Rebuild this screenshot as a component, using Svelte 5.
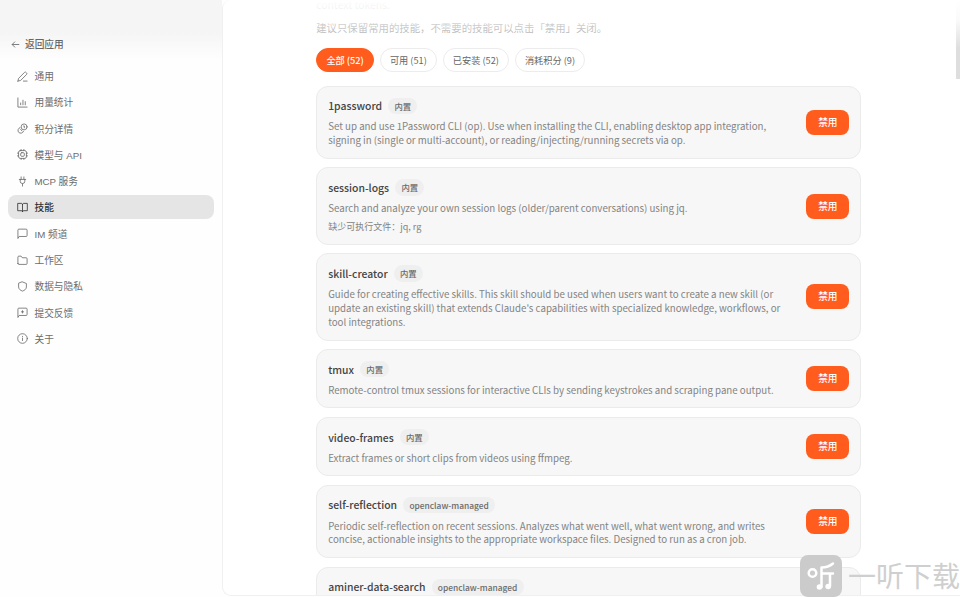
<script lang="ts">
  type Skill = {
    name: string;
    tag: string;
    desc: string;
    missing?: string;
  };

  const navItems = [
    { id: 'general', label: '通用' },
    { id: 'usage', label: '用量统计' },
    { id: 'credits', label: '积分详情' },
    { id: 'models', label: '模型与 API' },
    { id: 'mcp', label: 'MCP 服务' },
    { id: 'skills', label: '技能' },
    { id: 'im', label: 'IM 频道' },
    { id: 'workspace', label: '工作区' },
    { id: 'privacy', label: '数据与隐私' },
    { id: 'feedback', label: '提交反馈' },
    { id: 'about', label: '关于' }
  ];

  const filters = [
    { id: 'all', label: '全部', count: 52 },
    { id: 'available', label: '可用', count: 51 },
    { id: 'installed', label: '已安装', count: 52 },
    { id: 'paid', label: '消耗积分', count: 9 }
  ];

  const skills: Skill[] = [
    {
      name: '1password',
      tag: '内置',
      desc: 'Set up and use 1Password CLI (op). Use when installing the CLI, enabling desktop app integration, signing in (single or multi-account), or reading/injecting/running secrets via op.'
    },
    {
      name: 'session-logs',
      tag: '内置',
      desc: 'Search and analyze your own session logs (older/parent conversations) using jq.',
      missing: 'jq, rg'
    },
    {
      name: 'skill-creator',
      tag: '内置',
      desc: "Guide for creating effective skills. This skill should be used when users want to create a new skill (or update an existing skill) that extends Claude's capabilities with specialized knowledge, workflows, or tool integrations."
    },
    {
      name: 'tmux',
      tag: '内置',
      desc: 'Remote-control tmux sessions for interactive CLIs by sending keystrokes and scraping pane output.'
    },
    {
      name: 'video-frames',
      tag: '内置',
      desc: 'Extract frames or short clips from videos using ffmpeg.'
    },
    {
      name: 'self-reflection',
      tag: 'openclaw-managed',
      desc: 'Periodic self-reflection on recent sessions. Analyzes what went well, what went wrong, and writes concise, actionable insights to the appropriate workspace files. Designed to run as a cron job.'
    },
    {
      name: 'aminer-data-search',
      tag: 'openclaw-managed',
      desc: ''
    }
  ];

  let activeNav = $state('skills');
  let activeFilter = $state('all');
</script>

<div class="app">
  <aside class="sidebar">
    <button class="back" type="button">
      <svg viewBox="0 0 24 24"><path d="M21 12H4M10 5l-7 7 7 7" /></svg>
      <span>返回应用</span>
    </button>

    <nav>
      {#each navItems as item (item.id)}
        <button
          class="nav-item"
          class:active={activeNav === item.id}
          type="button"
          onclick={() => (activeNav = item.id)}
        >
          <svg viewBox="0 0 24 24">
            {#if item.id === 'general'}
              <path d="M2 22l1.5-6L16.500 3a2.200 2.200 0 0 1 3.100 0l1.400 1.400a2.200 2.200 0 0 1 0 3.100L8 20.500 2 22zM14 22h8" />
            {:else if item.id === 'usage'}
              <path d="M2 2v20h20M8 17v-4M13 17V7M18 17v-7" />
            {:else if item.id === 'credits'}
              <circle cx="15.5" cy="8.5" r="6.5" />
              <path d="M6.5 10a6.300 6.300 0 1 0 7.800 8M14.500 6.500h1.500v4M8 14l2.500 3" />
            {:else if item.id === 'models'}
              <rect x="3.5" y="3.5" width="17" height="17" rx="3.5" />
              <rect x="8" y="8" width="8" height="8" rx="2.5" />
              <path d="M9 1v2.500M15 1v2.500M9 20.500V23M15 20.500V23M1 9h2.500M1 15h2.500M20.500 9H23M20.500 15H23" />
            {:else if item.id === 'mcp'}
              <path d="M9 7V2M15 7V2M5 7.500h14M7 7.500v4a5 5 0 0 0 10 0v-4M12 17v5" />
            {:else if item.id === 'skills'}
              <path d="M12 5.500V21M12 5.500C12 4 10.700 3 9 3H1.500v16H9c1.700 0 3 .5 3 2 0-1.500 1.300-2 3-2h7.500V3H15c-1.700 0-3 1-3 2.500z" />
            {:else if item.id === 'im'}
              <path d="M2 22V4.500a2 2 0 0 1 2-2h16a2 2 0 0 1 2 2v12a2 2 0 0 1-2 2H5.500z" />
            {:else if item.id === 'workspace'}
              <path d="M2 18.500v-14a2 2 0 0 1 2-2h5L11.500 6H20a2 2 0 0 1 2 2v10.500a2 2 0 0 1-2 2H4a2 2 0 0 1-2-2z" />
            {:else if item.id === 'privacy'}
              <path d="M12 2l8.500 3.500V13c0 4.500-4 7.500-8.500 9-4.500-1.500-8.500-4.500-8.500-9V5.500z" />
            {:else if item.id === 'feedback'}
              <path d="M2 22V4.500a2 2 0 0 1 2-2h16a2 2 0 0 1 2 2v12a2 2 0 0 1-2 2H5.500zM12 8v5M9.500 10.500h5" />
            {:else}
              <circle cx="12" cy="12" r="10.5" />
              <path d="M12 11v5.500M12 7.200v.6" />
            {/if}
          </svg>
          <span>{item.label}</span>
        </button>
      {/each}
    </nav>
  </aside>

  <main class="panel">
    <div class="content">
      <div class="intro">
        <p>context tokens.</p>
        <p>建议只保留常用的技能，不需要的技能可以点击「禁用」关闭。</p>
      </div>

      <div class="filters">
        {#each filters as filter (filter.id)}
          <button
            class="filter"
            class:active={activeFilter === filter.id}
            type="button"
            onclick={() => (activeFilter = filter.id)}
          >{filter.label} ({filter.count})</button>
        {/each}
      </div>

      <div class="skills">
        {#each skills as skill (skill.name)}
          <article class="card">
            <div class="info">
              <div class="title">
                <h3>{skill.name}</h3>
                <span class="tag">{skill.tag}</span>
              </div>
              <p class="desc">{skill.desc}</p>
              {#if skill.missing}
                <p class="missing">缺少可执行文件：{skill.missing}</p>
              {/if}
            </div>
            {#if skill.desc}
              <button class="toggle" type="button">禁用</button>
            {/if}
          </article>
        {/each}
      </div>
    </div>
    <div class="fade"></div>
    <div class="scrollbar"></div>
  </main>

  <div class="watermark">
    <svg class="mark" viewBox="0 0 42 42">
      <rect width="42" height="42" rx="8" />
      <circle cx="12.5" cy="18" r="3.8" />
      <path d="M21.500 32V12.500c4 0 8-1 11.500-4M21.500 18.500H33M30 18.500V31" />
      <circle class="dot" cx="19.5" cy="32" r="2.8" />
      <circle class="dot" cx="28.2" cy="31.5" r="2.8" />
    </svg>
    <span>一听下载</span>
  </div>
</div>

<style>
  :global(body) {
    margin: 0;
    background: #fefefe;
  }

  .app {
    position: relative;
    display: flex;
    width: 960px;
    height: 597px;
    overflow: hidden;
    font-family: 'Noto Sans CJK SC', sans-serif;
    color: #444;
  }

  button {
    margin: 0;
    border: 0;
    padding: 0;
    font-family: inherit;
    cursor: pointer;
  }

  h3,
  p {
    margin: 0;
    font-weight: 400;
  }

  svg {
    flex: none;
    fill: none;
    stroke: currentColor;
    stroke-width: 1.8;
    stroke-linecap: round;
    stroke-linejoin: round;
  }

  /* 侧边栏 */
  .sidebar {
    box-sizing: border-box;
    width: 222px;
    flex: none;
    padding: 34px 8px 0;
    background: linear-gradient(#f5f5f5 0, #f5f5f5 32px, #fefefe 60px);
    font-family: 'Liberation Sans', 'Noto Sans CJK SC', sans-serif;
  }

  .back {
    display: flex;
    align-items: center;
    gap: 5px;
    height: 20px;
    padding-left: 3px;
    background: none;
    font-size: 9.7px;
    font-weight: 500;
    color: #666;
  }

  .back svg {
    width: 9px;
    height: 9px;
    stroke-width: 2.2;
  }

  nav {
    display: flex;
    flex-direction: column;
    gap: 2.3px;
    margin-top: 10px;
  }

  .nav-item {
    display: flex;
    align-items: center;
    gap: 6.5px;
    height: 24px;
    padding-left: 9px;
    border-radius: 8px;
    background: none;
    font-size: 9.7px;
    color: #6c6c6c;
  }

  .nav-item svg {
    width: 11px;
    height: 11px;
  }

  .nav-item.active {
    background: #e5e5e5;
    font-weight: 500;
    color: #333;
  }

  /* 主面板 */
  .panel {
    position: relative;
    box-sizing: border-box;
    flex: 1;
    height: 596px;
    overflow: hidden;
    border: 1px solid #f0f0f0;
    border-width: 0 0 1px 1px;
    border-radius: 9px 0 0 9px;
    background: #fff;
  }

  .content {
    width: 545.2px;
    margin-left: 93.2px;
  }

  .intro {
    height: 48px;
    font-size: 10.4px;
    line-height: 23px;
    color: #888;
  }

  .intro p:first-child {
    height: 16px;
    line-height: 10px;
  }

  .filters {
    display: flex;
    gap: 5.7px;
    margin-bottom: 13.7px;
  }

  .filter {
    box-sizing: border-box;
    height: 24px;
    padding: 0 9.2px 1px;
    border: 1px solid #ececec;
    border-radius: 12px;
    background: #fff;
    font-size: 9.2px;
    line-height: 20px;
    color: #666;
    white-space: nowrap;
  }

  .filter.active {
    border-color: #ff5c1d;
    background: #ff5c1d;
    font-weight: 500;
    color: #fff;
  }

  .skills {
    display: flex;
    flex-direction: column;
    gap: 8.5px;
  }

  .card {
    display: flex;
    align-items: center;
    box-sizing: border-box;
    gap: 12px;
    padding: 10.7px 11px 9.7px;
    border: 1px solid #ebebeb;
    border-radius: 12px;
    background: #f7f7f7;
  }

  .info {
    flex: 1;
    min-width: 0;
  }

  .title {
    display: flex;
    align-items: center;
    gap: 6px;
    height: 17px;
    margin-bottom: 6.1px;
  }

  .title h3 {
    font-size: 10.4px;
    font-weight: 500;
    line-height: 17px;
  }

  .tag {
    padding: 0 6.3px;
    border-radius: 9px;
    background: #efefef;
    font-size: 8.4px;
    font-weight: 500;
    line-height: 16.5px;
    color: #6a6a6a;
  }

  .desc {
    min-height: 13.9px;
    font-size: 9.71px;
    line-height: 13.9px;
    color: #838383;
  }

  .missing {
    margin-top: 4px;
    font-size: 9px;
    line-height: 14px;
    color: #838383;
  }

  .toggle {
    flex: none;
    width: 43px;
    height: 25px;
    padding-bottom: 1px;
    margin-bottom: 1px;
    border-radius: 8px;
    background: #ff5c1d;
    font-size: 9.7px;
    font-weight: 500;
    color: #fff;
  }

  .fade {
    position: absolute;
    inset: 0 0 auto;
    height: 48px;
    background: linear-gradient(#fff 0, rgba(255, 255, 255, 0.9) 8px, rgba(255, 255, 255, 0.5) 30px, rgba(255, 255, 255, 0) 48px);
    pointer-events: none;
  }

  .scrollbar {
    position: absolute;
    top: 0;
    right: 0;
    width: 4px;
    height: 79px;
    background: linear-gradient(#fff, #fafafa 20px, #dedede 48px);
  }

  /* 右下角水印 */
  .watermark {
    position: absolute;
    right: 0;
    bottom: 0;
    display: flex;
    align-items: center;
    gap: 6px;
    height: 42px;
    font-size: 28px;
    line-height: 42px;
    color: #cfcfcf;
    white-space: nowrap;
  }

  .watermark span {
    margin-top: -3px;
  }

  .mark {
    width: 42px;
    height: 42px;
    stroke: #fff;
    stroke-width: 2.5;
  }

  .mark rect {
    fill: #cbcbcb;
    stroke: none;
  }

  .mark .dot {
    fill: #fff;
    stroke: none;
  }
</style>
